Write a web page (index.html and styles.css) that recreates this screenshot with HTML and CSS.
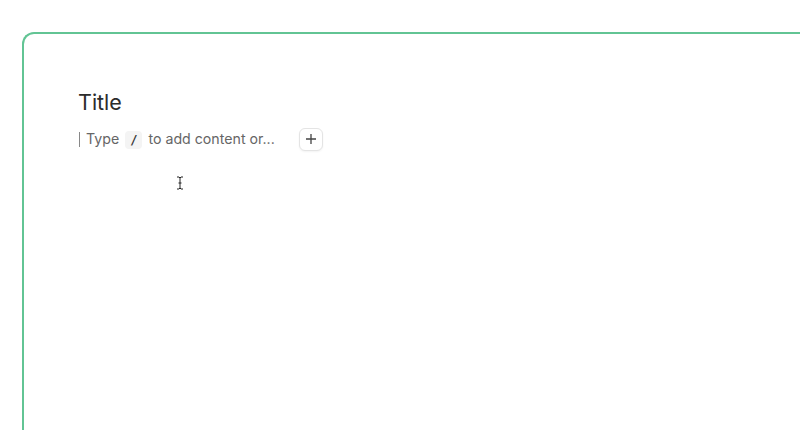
FILE: index.html
```html
<!DOCTYPE html>
<html>
<head>
<meta charset="utf-8">
<link rel="stylesheet" href="styles.css">
</head>
<body>
<div class="frame">
  <div class="editor">
    <h1 class="title">Title</h1>
    <div class="line">
      <span class="caret"></span>
      <span class="placeholder">Type <code class="slash">/</code> to add content or...</span>
      <button class="add" aria-label="Add">
        <svg width="12" height="12" viewBox="0 0 12 12"><path d="M6 1v10M1 6h10" stroke="#444" stroke-width="1.3" fill="none"/></svg>
      </button>
    </div>
  </div>
  <svg class="pointer" width="8" height="14" viewBox="0 0 8 14"><path d="M1 1h2l1 1 1-1h2M4 2v10M1 13h2l1-1 1 1h2M2.5 7h3" stroke="#222" stroke-width="1" fill="none"/></svg>
</div>
</body>
</html>
```
FILE: styles.css
```css
html, body {
  margin: 0;
  padding: 0;
  background: #fff;
  overflow: hidden;
}
body {
  font-family: Inter, "Noto Sans", sans-serif;
  width: 800px;
  height: 430px;
}
.frame {
  position: relative;
  margin: 32px 0 0 22px;
  width: 778px;
  height: 398px;
  border: 2px solid #62c494;
  border-right: none;
  border-bottom: none;
  border-top-left-radius: 12px;
  box-sizing: border-box;
}
.editor {
  padding: 54px 0 0 54px;
}
.title {
  margin: 0;
  font-size: 21.5px;
  font-weight: 400;
  color: #2b2b2b;
  line-height: 28px;
}
.line {
  display: flex;
  align-items: center;
  margin-top: 11px;
  height: 24px;
}
.caret {
  width: 1px;
  height: 15px;
  background: #888;
  margin-left: 1px;
  margin-right: 6px;
}
.placeholder {
  font-size: 14.2px;
  color: #666;
  line-height: 20px;
}
.slash {
  display: inline-block;
  font-family: "DejaVu Sans Mono", monospace;
  font-size: 12px;
  font-weight: 700;
  color: #333;
  background: #f4f4f4;
  border-radius: 4px;
  padding: 0 5px;
  margin: 0 2px;
  line-height: 18px;
}
.add {
  margin-left: 24px;
  width: 24px;
  height: 23px;
  border: 1px solid #e4e4e4;
  border-radius: 6px;
  background: #fff;
  display: flex;
  align-items: center;
  justify-content: center;
  padding: 0;
  box-shadow: 0 1px 2px rgba(0,0,0,0.05);
}
.pointer {
  position: absolute;
  left: 152px;
  top: 142px;
}
```
